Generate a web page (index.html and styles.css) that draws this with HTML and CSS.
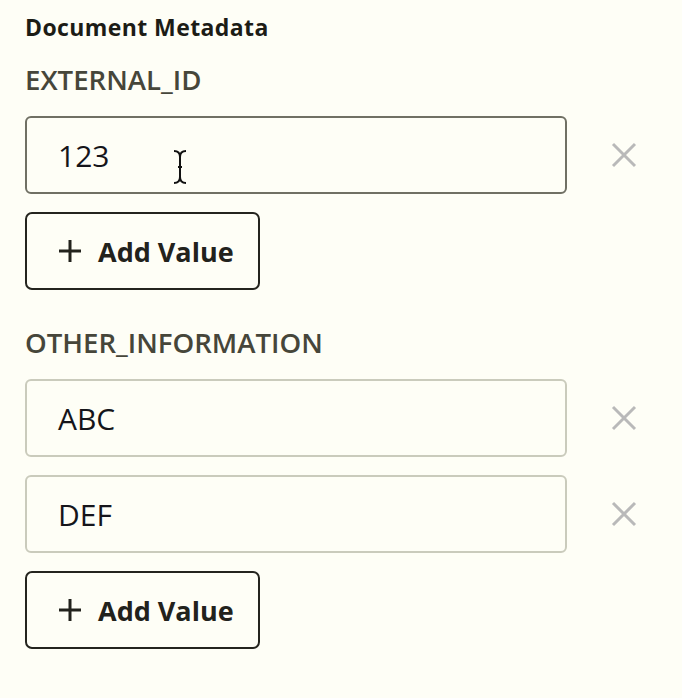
FILE: index.html
```html
<!DOCTYPE html>
<html lang="en">
<head>
    <meta charset="UTF-8">
    <meta name="viewport" content="width=device-width, initial-scale=1.0">
    <title>Document Metadata</title>
    <link rel="stylesheet" href="styles.css">
</head>
<body>
    <main class="metadata">
        <h1 class="metadata-title">Document Metadata</h1>

        <section class="field">
            <h2 class="field-name">EXTERNAL_ID</h2>
            <div class="value-row">
                <div class="value-box active">
                    <span>123</span>
                    <!-- mouse cursor caught in the capture -->
                    <svg class="cursor" width="16" height="36" viewBox="0 0 16 36">
                        <path d="M2 2 Q8 2 8 8 Q8 2 14 2 M8 8 V28 Q8 34 2 34 M8 28 Q8 34 14 34 M6 18 H10" fill="none" stroke="#111" stroke-width="2"/>
                    </svg>
                </div>
                <button class="remove" title="Remove">
                    <svg width="26" height="26" viewBox="0 0 26 26"><path d="M2 2 L24 24 M24 2 L2 24" stroke="currentColor" stroke-width="3"/></svg>
                </button>
            </div>
            <button class="add-value">
                <svg width="24" height="24" viewBox="0 0 24 24"><path d="M12 1 V23 M1 12 H23" stroke="currentColor" stroke-width="3"/></svg>
                Add Value
            </button>
        </section>

        <section class="field">
            <h2 class="field-name">OTHER_INFORMATION</h2>
            <div class="value-row">
                <div class="value-box"><span>ABC</span></div>
                <button class="remove" title="Remove">
                    <svg width="26" height="26" viewBox="0 0 26 26"><path d="M2 2 L24 24 M24 2 L2 24" stroke="currentColor" stroke-width="3"/></svg>
                </button>
            </div>
            <div class="value-row">
                <div class="value-box"><span>DEF</span></div>
                <button class="remove" title="Remove">
                    <svg width="26" height="26" viewBox="0 0 26 26"><path d="M2 2 L24 24 M24 2 L2 24" stroke="currentColor" stroke-width="3"/></svg>
                </button>
            </div>
            <button class="add-value">
                <svg width="24" height="24" viewBox="0 0 24 24"><path d="M12 1 V23 M1 12 H23" stroke="currentColor" stroke-width="3"/></svg>
                Add Value
            </button>
        </section>
    </main>
</body>
</html>
```

FILE: styles.css
```css
body {
    font-family: "Open Sans", "Noto Sans", sans-serif;
    background-color: #fefef6;
    color: #1c1c16;
    margin: 0;
    padding: 12px 0 0 25px;
}

.metadata-title {
    font-size: 23px;
    font-weight: 700;
    letter-spacing: 0.4px;
    line-height: 30px;
    margin: 0 0 19px;
}

.field {
    margin-bottom: 34px;
}

.field-name {
    font-size: 27.6px;
    font-weight: 600;
    line-height: 36px;
    color: #46463a;
    margin: 0 0 19px;
}

.value-row {
    display: flex;
    align-items: center;
    margin-bottom: 18px;
}

.value-box {
    position: relative;
    box-sizing: border-box;
    width: 542px;
    height: 78px;
    display: flex;
    align-items: center;
    padding-left: 31px;
    border: 2px solid #cacbbc;
    border-radius: 6px;
    font-size: 30px;
    color: #15151a;
}

.value-box.active {
    border-color: #707064;
}

.cursor {
    position: absolute;
    left: 145px;
    top: 31px;
}

.remove {
    background: none;
    border: none;
    padding: 0;
    margin-left: 33px;
    width: 48px;
    height: 48px;
    display: flex;
    align-items: center;
    justify-content: center;
    color: #b9b9b9;
    cursor: pointer;
}

.add-value {
    box-sizing: border-box;
    height: 78px;
    display: flex;
    align-items: center;
    gap: 16px;
    padding: 0 24px 0 31px;
    background: none;
    border: 2px solid #24241e;
    border-radius: 7px;
    font-family: inherit;
    font-size: 27px;
    font-weight: 700;
    color: #22221c;
    cursor: pointer;
}
```
